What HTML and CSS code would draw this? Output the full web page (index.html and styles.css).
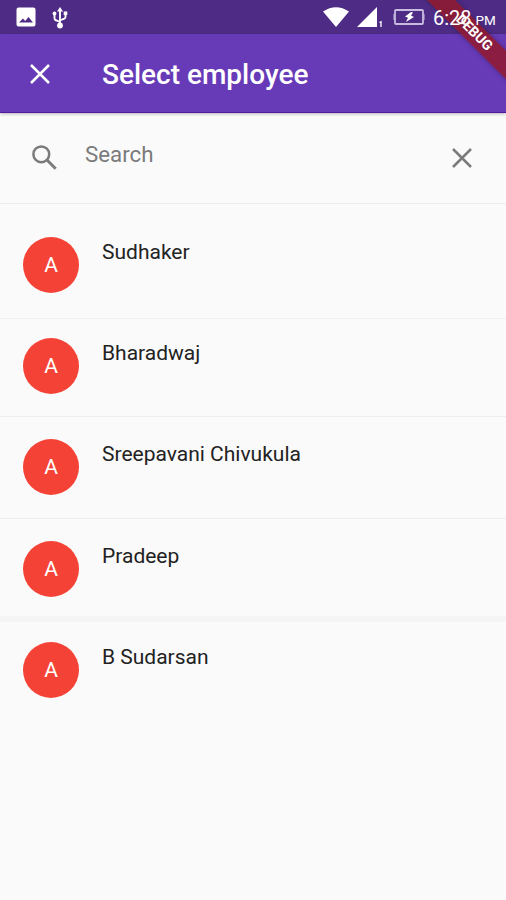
FILE: index.html
```html
<!DOCTYPE html>
<html lang="en">
<head>
<meta charset="utf-8">
<title>Select employee</title>
<link rel="stylesheet" href="styles.css">
</head>
<body>
<div class="screen">
  <header class="status">
    <svg class="photo" viewBox="0 0 20 20"><path fill="#fff" fill-rule="evenodd" d="M2.500 .5h15a2 2 0 0 1 2 2v15a2 2 0 0 1-2 2h-15a2 2 0 0 1-2-2v-15a2 2 0 0 1 2-2zM3 15.500h14l-4.500-5.500-3.300 4-2.200-2.500z"/></svg>
    <svg class="usb" viewBox="0 0 16 22"><path d="M8 3v16M2.500 7v4q0 2 2 2.500L8 15M13.500 6v4q0 1.500-2 2L8 13.500" fill="none" stroke="#fff" stroke-width="1.900"/><path d="M8 0l3 4.500H5z" fill="#fff"/><circle cx="8" cy="18.500" r="2.900" fill="#fff"/><circle cx="2.500" cy="6.500" r="1.900" fill="#fff"/><path d="M11.700 4.500h3.600v3.500h-3.600z" fill="#fff"/></svg>
    <svg class="wifi" viewBox="0 0 26 20"><path d="M0 4.500Q13-4 26 4.500L13 20z" fill="#fff"/></svg>
    <svg class="signal" viewBox="0 0 26 20"><path d="M20 0v20H0z" fill="#fff"/><path d="M22.500 15.500l1.500-.7v5.200" fill="none" stroke="#fff" stroke-width="1.300"/></svg>
    <svg class="battery" viewBox="0 0 32 18"><path d="M3 2h26q1 0 1 1v12q0 1-1 1H3q-1 0-1-1V3q0-1 1-1z" fill="none" stroke="#c9bbdf" stroke-width="1.800"/><path d="M1 6v6M31 6v6" stroke="#c9bbdf" stroke-width="1"/><path d="M18 4l-6 4.500 3 1.200-2 4.300 8-5-3-1.500 2-3z" fill="#fff"/></svg>
    <div class="clock">6:28<span class="meridiem">PM</span></div>
  </header>
  <div class="appbar">
    <svg class="close" viewBox="0 0 20 20"><path d="M1 1l18 18M19 1L1 19" stroke="#fff" stroke-width="2.500"/></svg>
    <h1>Select employee</h1>
  </div>
  <div class="search">
    <svg class="lens" viewBox="0 0 25 25"><circle cx="9.300" cy="9.300" r="7.900" fill="none" stroke="#7b7b7b" stroke-width="2.500"/><path d="M15 15l8.700 8.700" stroke="#7b7b7b" stroke-width="3"/></svg>
    <span class="hint">Search</span>
    <svg class="clear" viewBox="0 0 20 20"><path d="M1 1l18 18M19 1L1 19" stroke="#7b7b7b" stroke-width="2.500"/></svg>
  </div>
  <ul class="list">
    <li><span class="avatar">A</span><span class="name">Sudhaker</span></li>
    <li><span class="avatar">A</span><span class="name">Bharadwaj</span></li>
    <li><span class="avatar">A</span><span class="name">Sreepavani Chivukula</span></li>
    <li><span class="avatar">A</span><span class="name">Pradeep</span></li>
    <li><span class="avatar">A</span><span class="name">B Sudarsan</span></li>
  </ul>
  <div class="ribbon">DEBUG</div>
</div>
</body>
</html>
```
FILE: styles.css
```css
* { box-sizing: border-box; }
body { margin: 0; font-family: Roboto, "Liberation Sans", sans-serif; }
.screen { position: relative; width: 506px; height: 900px; overflow: hidden; background: #fafafa; }
svg { display: block; flex: none; }

.status { display: flex; height: 34px; padding: 0 10px 0 16px; background: #4e2c86; color: #fff; }
.photo { width: 20px; height: 20px; margin-top: 7px; }
.usb { width: 16px; height: 22px; margin: 7px 0 0 16px; }
.wifi { width: 26px; height: 20px; margin: 7px 0 0 255px; }
.signal { width: 26px; height: 20px; margin: 7px 0 0 8px; }
.battery { width: 32px; height: 18px; margin: 8px 0 0 10px; }
.clock { position: relative; z-index: 2; flex: none; margin: 6px 0 0 8px; font-size: 20px; line-height: 24px; white-space: nowrap; }
.meridiem { margin-left: 4px; font-size: 13.5px; }

.appbar { display: flex; align-items: center; height: 79px; padding-left: 30px; background: #673ab7; border-bottom: 1px solid #5118a2; box-shadow: 0 1px 3px rgba(0, 0, 0, .28); color: #fff; }
.close { width: 20px; height: 20px; margin-top: 1px; }
h1 { margin: 4px 0 0 52px; font-size: 28px; font-weight: 500; line-height: 32px; white-space: nowrap; }

.search { display: flex; height: 91px; padding: 0 34px 0 32px; border-bottom: 1px solid #eee; }
.lens { width: 25px; height: 25px; margin-top: 32px; }
.hint { flex: 1; margin: 27px 0 0 28px; font-size: 22.3px; line-height: 28px; color: #7b7b7b; }
.clear { width: 20px; height: 20px; margin-top: 35px; }

.list { margin: 0; padding: 0; list-style: none; }
.list li { display: flex; height: 102px; padding: 22px 23px 0; border-bottom: 1px solid #eee; }
.list li:nth-child(1) { height: 115px; padding-top: 33px; border-bottom-color: #f1f1f1; }
.list li:nth-child(2) { height: 98px; padding-top: 19px; }
.list li:nth-child(4) { height: 103px; padding-top: 22px; border-bottom: 6px solid #f5f5f5; }
.list li:nth-child(5) { padding-top: 20px; border-bottom: 0; }
.avatar { display: grid; place-items: center; flex: none; width: 56px; height: 56px; border-radius: 50%; background: #f44336; color: #fff; font-size: 21px; }
.name { margin: 2px 0 0 23px; font-size: 21px; line-height: 26px; color: #222; white-space: nowrap; }

.ribbon { position: absolute; z-index: 1; top: 23px; left: 399px; width: 150px; height: 20px; background: rgba(145, 25, 45, .85); box-shadow: 0 0 5px rgba(0, 0, 0, .3); color: #fff; font-size: 14px; font-weight: 700; line-height: 19px; text-align: center; transform: rotate(45deg); }
```
